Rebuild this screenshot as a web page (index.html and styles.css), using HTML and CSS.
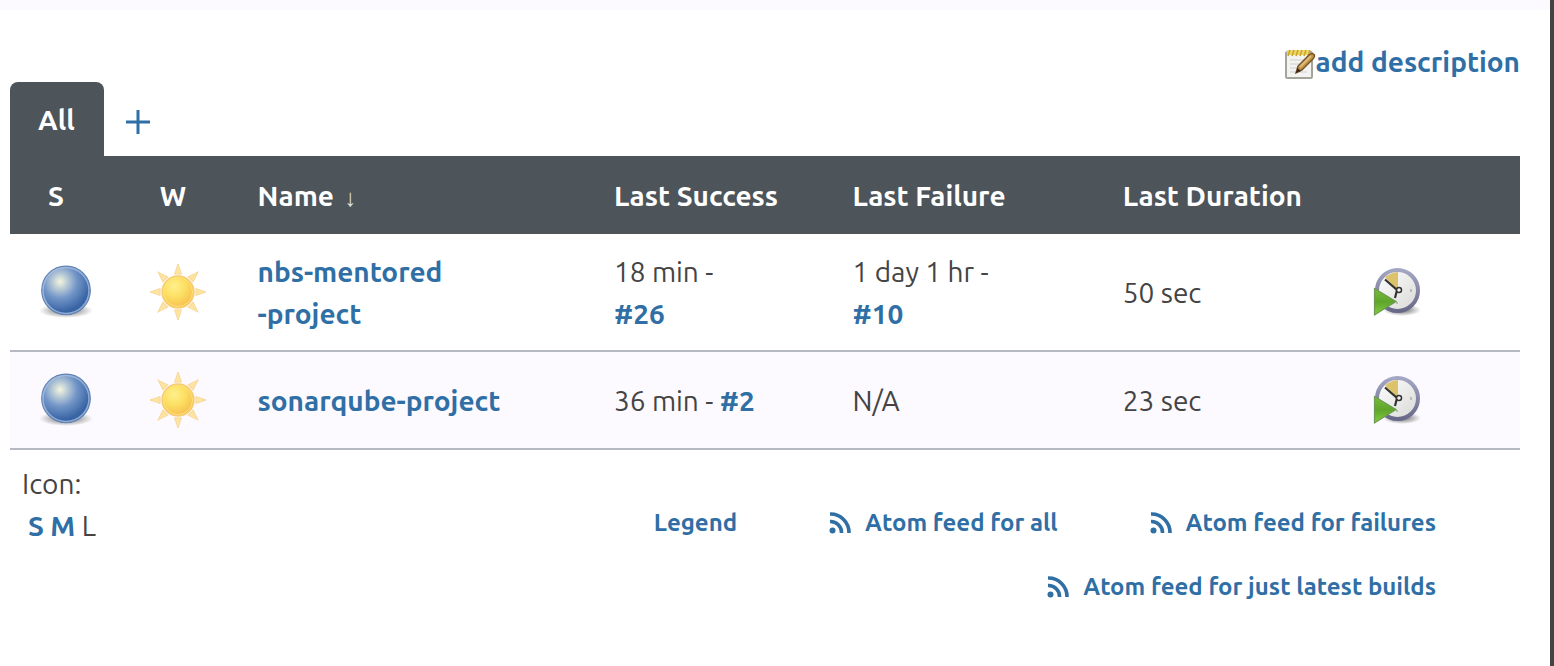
FILE: index.html
```html
<!DOCTYPE html>
<html lang="en">
<head>
<meta charset="utf-8">
<title>Dashboard</title>
<link rel="stylesheet" href="styles.css">
</head>
<body>
<svg class="defs" aria-hidden="true">
  <defs>
    <radialGradient id="ballFill" cx="0.38" cy="0.32" r="0.62">
      <stop offset="0" stop-color="#f4f5dc"/><stop offset="0.2" stop-color="#c5d3d8"/>
      <stop offset="0.55" stop-color="#7396c8"/><stop offset="1" stop-color="#3864a4"/>
    </radialGradient>
    <radialGradient id="shadow"><stop offset="0" stop-color="#000" stop-opacity="0.6"/><stop offset="1" stop-color="#000" stop-opacity="0"/></radialGradient>
    <radialGradient id="sunFill" cx="0.38" cy="0.32" r="0.7">
      <stop offset="0" stop-color="#fff08c"/><stop offset="0.5" stop-color="#fbdf62"/><stop offset="1" stop-color="#f7bd50"/>
    </radialGradient>
    <linearGradient id="rim" x2="0" y2="1"><stop offset="0" stop-color="#a3a7c4"/><stop offset="1" stop-color="#686888"/></linearGradient>
    <linearGradient id="face" x2="1" y2="1"><stop offset="0" stop-color="#fff"/><stop offset="1" stop-color="#d8d8d6"/></linearGradient>
    <linearGradient id="play" x2="0" y2="1"><stop offset="0" stop-color="#79bd3c"/><stop offset="0.5" stop-color="#5ea52b"/><stop offset="1" stop-color="#84ce3e"/></linearGradient>
    <symbol id="ball" viewBox="0 0 56 56">
      <ellipse cx="28" cy="46" rx="26" ry="7" fill="url(#shadow)"/>
      <circle cx="28" cy="26.500" r="23.500" fill="url(#ballFill)" stroke="#5f80b5" stroke-width="1"/>
      <circle cx="28" cy="26.500" r="22.200" fill="none" stroke="#a9c2e2" stroke-width="1.500" opacity="0.750"/>
    </symbol>
    <symbol id="sun" viewBox="0 0 60 60">
      <g fill="#fce5a0" stroke="#f9d79a" stroke-width="1">
        <path d="M30 1L33.600 11.500H26.400Z"/>
        <path d="M30 1L33.600 11.500H26.400Z" transform="rotate(45 30 30)"/>
        <path d="M30 1L33.600 11.500H26.400Z" transform="rotate(90 30 30)"/>
        <path d="M30 1L33.600 11.500H26.400Z" transform="rotate(135 30 30)"/>
        <path d="M30 1L33.600 11.500H26.400Z" transform="rotate(180 30 30)"/>
        <path d="M30 1L33.600 11.500H26.400Z" transform="rotate(225 30 30)"/>
        <path d="M30 1L33.600 11.500H26.400Z" transform="rotate(270 30 30)"/>
        <path d="M30 1L33.600 11.500H26.400Z" transform="rotate(315 30 30)"/>
      </g>
      <circle cx="30" cy="30" r="16.500" fill="url(#sunFill)" stroke="#f8cb74" stroke-width="1.500"/>
      <circle cx="30" cy="30" r="15" fill="none" stroke="#fde27a" stroke-width="1"/>
    </symbol>
    <symbol id="clock" viewBox="0 0 48 50">
      <ellipse cx="29" cy="43" rx="19" ry="6" fill="url(#shadow)"/>
      <circle cx="24.500" cy="23.500" r="20.500" fill="url(#face)" stroke="url(#rim)" stroke-width="4"/>
      <path d="M24 22L12 10.500Q17.500 5.500 25 5V22Z" fill="#dcc269"/>
      <path d="M12 12.500L24 23L22 31" fill="none" stroke="#34342f" stroke-width="2.200"/>
      <circle cx="26" cy="23" r="2.500" fill="#f4f4f0" stroke="#33332f" stroke-width="1.500"/>
      <path d="M38 22V25M24 35V37" stroke="#b7beb0" stroke-width="2"/>
      <path d="M1.500 21.500L23 34.500L1.500 48Z" fill="url(#play)" stroke="#6c9a55" stroke-width="1.200"/>
    </symbol>
    <symbol id="feed" viewBox="0 0 22 22">
      <circle cx="3.500" cy="18.500" r="3" fill="currentColor"/>
      <path d="M1 9.500A11 11 0 0 1 12.500 21M1 2A18.500 18.500 0 0 1 20 21" fill="none" stroke="currentColor" stroke-width="3.600"/>
    </symbol>
  </defs>
</svg>
<div class="page">
  <div class="topbar"></div>
  <main class="main">
    <div class="description">
      <a class="desc-link" href="#">
        <svg class="note" viewBox="0 0 31 32" aria-hidden="true">
          <rect x="1" y="4" width="26" height="26" rx="1.500" fill="#f3f3f1" stroke="#a3a49c" stroke-width="2"/>
          <path d="M5 12H22M5 16H20M5 20H18M5 24H22" stroke="#cfcfcf" stroke-width="1.200"/>
          <path d="M2 2H25V7H2Z" fill="#efd768"/>
          <path d="M3 8L5 2M7 8L9 2M11 8L13 2M15 8L17 2M19 8L21 2M23 8L25 2" stroke="#c9a52a" stroke-width="1.500"/>
          <path d="M11 25L13 18L24 7Q27 4 29.500 7Q30 9 28 11L17 22Z" fill="#bd9148" stroke="#755225" stroke-width="1.400"/>
          <path d="M15 19L26 8" stroke="#dfbd78" stroke-width="2"/>
          <path d="M11 25L12.500 20L16 23Z" fill="#3b2a1c"/>
        </svg>add description</a>
    </div>
    <nav class="tabs">
      <a class="tab" href="#">All</a>
      <a class="new-view" href="#" aria-label="New view"><svg class="plus" viewBox="0 0 24 24" aria-hidden="true"><path d="M12 0V24M0 12H24" stroke="currentColor" stroke-width="3"/></svg></a>
    </nav>
    <table class="jobs">
      <colgroup><col class="c-status"><col class="c-weather"><col class="c-name"><col class="c-success"><col class="c-failure"><col class="c-duration"><col></colgroup>
      <thead>
        <tr><th class="icon-head">S</th><th class="icon-head">W</th><th>Name <span class="arrow">↓</span></th><th>Last Success</th><th>Last Failure</th><th>Last Duration</th><th></th></tr>
      </thead>
      <tbody>
        <tr>
          <td class="icon-cell"><svg class="icon" role="img" aria-label="Success"><use href="#ball"/></svg></td>
          <td class="icon-cell"><svg class="icon" role="img" aria-label="Stable"><use href="#sun"/></svg></td>
          <td><a href="#">nbs-mentored<br>-project</a></td>
          <td>18 min -<br><a href="#">#26</a></td>
          <td>1 day 1 hr -<br><a href="#">#10</a></td>
          <td>50 sec</td>
          <td class="icon-cell build-cell"><button class="build" type="button" aria-label="Schedule a build"><svg class="clock" aria-hidden="true"><use href="#clock"/></svg></button></td>
        </tr>
        <tr>
          <td class="icon-cell"><svg class="icon" role="img" aria-label="Success"><use href="#ball"/></svg></td>
          <td class="icon-cell"><svg class="icon" role="img" aria-label="Stable"><use href="#sun"/></svg></td>
          <td><a href="#">sonarqube-project</a></td>
          <td>36 min - <a href="#">#2</a></td>
          <td>N/A</td>
          <td>23 sec</td>
          <td class="icon-cell build-cell"><button class="build" type="button" aria-label="Schedule a build"><svg class="clock" aria-hidden="true"><use href="#clock"/></svg></button></td>
        </tr>
      </tbody>
    </table>
    <footer class="footer">
      <div class="sizes">
        <div>Icon:</div>
        <div class="size-list"><a href="#">S</a> <a href="#">M</a> L</div>
      </div>
      <div class="feeds">
        <a href="#">Legend</a>
        <a class="feed" href="#"><svg class="rss" aria-hidden="true"><use href="#feed"/></svg>Atom feed for all</a>
        <a class="feed" href="#"><svg class="rss" aria-hidden="true"><use href="#feed"/></svg>Atom feed for failures</a>
        <a class="feed" href="#"><svg class="rss" aria-hidden="true"><use href="#feed"/></svg>Atom feed for just latest builds</a>
      </div>
    </footer>
  </main>
</div>
</body>
</html>
```
FILE: styles.css
```css
* { box-sizing: border-box; }
body {
  margin: 0;
  background: #fff;
  color: #444;
  font: 28px/42px "Ubuntu", "Noto Sans", "Open Sans", sans-serif;
}
a { color: #2f6fa5; font-weight: 700; text-decoration: none; }
.defs { position: absolute; width: 0; height: 0; }
.page { min-height: 100vh; border-right: 4px solid #424442; }
.topbar { height: 10px; background: #fcfafe; }
.main { padding: 31px 30px 32px 10px; }
.description { display: flex; justify-content: flex-end; }
.desc-link { display: flex; align-items: center; }
.note { width: 31px; height: 32px; margin-top: 4px; }
.tabs { display: flex; align-items: stretch; height: 74px; margin-top: -1px; }
.tab {
  padding: 17px 29px 0 28px;
  border-radius: 8px 8px 0 0;
  background: #4d545a;
  color: #fff;
}
.new-view { display: flex; align-items: center; padding: 6px 22px 0; }
.plus { width: 24px; height: 24px; }
.jobs { width: 100%; table-layout: fixed; border-collapse: collapse; }
.c-status { width: 7.4%; }
.c-weather { width: 8.2%; }
.c-name { width: 23.6%; }
.c-success { width: 15.8%; }
.c-failure { width: 17.9%; }
.c-duration { width: 16.6%; }
th {
  height: 78px;
  padding: 2px 0 0 12px;
  background: #4d545a;
  color: #fff;
  font-weight: 700;
  text-align: left;
  white-space: nowrap;
}
.arrow { margin-left: 4px; font-size: 24px; line-height: 24px; font-weight: 400; color: #dfe3e6; }
td { padding: 17px 0 15px 12px; border-bottom: 2px solid #b3b8c2; vertical-align: middle; }
th.icon-head { padding-left: 38px; }
td.icon-cell { padding: 16px 0 16px 27px; }
td.build-cell { padding-left: 12px; }
tbody tr:nth-child(even) { height: 98px; background: #fcfafe; }
.icon { display: block; width: 58px; height: 58px; }
.build { display: block; padding: 0; border: 0; background: none; cursor: pointer; }
.clock { display: block; width: 48px; height: 50px; }
.footer { display: flex; justify-content: space-between; padding: 13px 84px 0 12px; }
.size-list { padding-left: 6px; }
.feeds {
  display: flex;
  flex-wrap: wrap;
  justify-content: flex-end;
  gap: 22px 92px;
  max-width: 860px;
  padding-top: 39px;
  font-size: 24px;
}
.feed { display: flex; align-items: center; gap: 14px; }
.rss { width: 22px; height: 22px; }
```
